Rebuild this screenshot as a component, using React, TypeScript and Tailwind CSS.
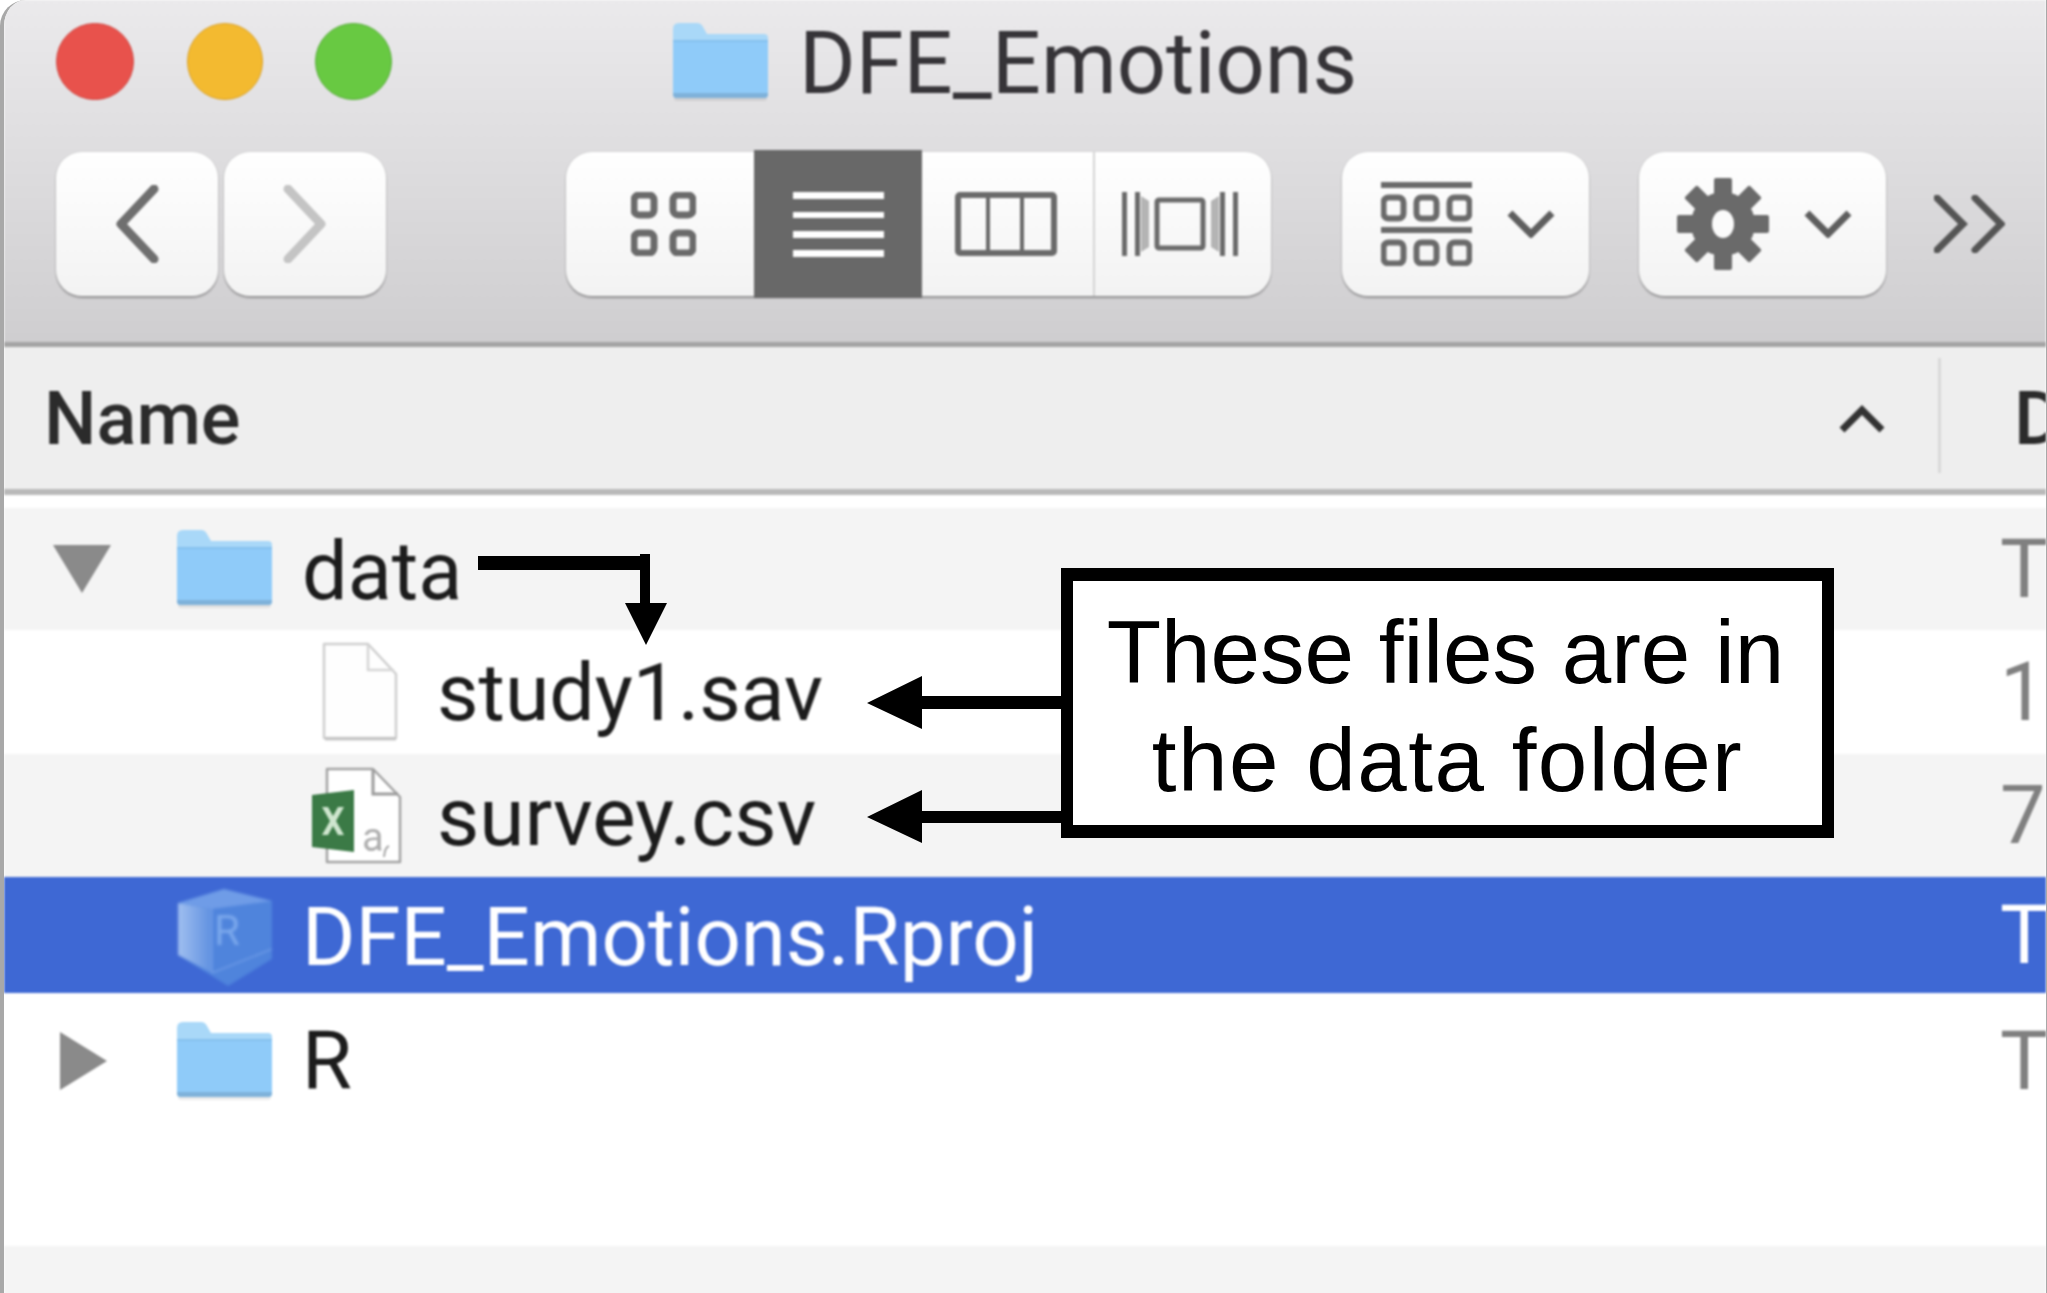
import React from "react";

function Folder({ className = "" }: { className?: string }) {
  return (
    <svg viewBox="0 0 95 78" className={`w-[95px] h-[78px] shrink-0 ${className}`}>
      <rect x="1" y="72" width="93" height="6" rx="3" fill="#000" opacity="0.08" />
      <path d="M0 6 Q0 0 6 0 H24 Q28 0 30 4 L34 11 H91 Q95 11 95 15 V24 H0 Z" fill="#a9d8f8" />
      <path d="M0 18 H95 V72 Q95 75 91 75 H4 Q0 75 0 72 Z" fill="#8fcbf9" />
      <rect x="0" y="17" width="95" height="2" fill="#85c0ee" />
      <path d="M0 70 H95 V71 Q95 75 91 75 H4 Q0 75 0 71 Z" fill="#7fb2da" />
    </svg>
  );
}

function FileIcon() {
  return (
    <svg viewBox="0 0 76 100" className="w-[76px] h-[100px]">
      <path d="M2 2 H46 L74 32 V96 H2 Z" fill="#fefefe" stroke="#cfcfcf" strokeWidth="2.5" strokeLinejoin="round" />
      <path d="M46 3 V28 H72" fill="none" stroke="#d6d6d6" strokeWidth="2.5" />
      <rect x="3" y="96" width="71" height="3" fill="#000" opacity="0.12" />
    </svg>
  );
}

function ExcelIcon() {
  return (
    <svg viewBox="0 0 90 98" className="w-[90px] h-[98px]">
      <path d="M15 2 H61 L88 30 V95 H15 Z" fill="#fff" stroke="#a3a3a3" strokeWidth="2.5" strokeLinejoin="round" />
      <path d="M61 3 V27 H86" fill="none" stroke="#9c9c9c" strokeWidth="3" />
      <path d="M0 28 L42 23 V85 L0 80 Z" fill="#3b7a46" />
      <path d="M10 40 H16 L21 49 L26 40 H32 L24 54 L32 68 H26 L21 59 L16 68 H10 L18 54 Z" fill="#cfe6cf" />
      <text x="50" y="84" fontSize="40" fill="#b0b0b0" fontFamily="Roboto, sans-serif">a</text>
      <path d="M72 90 Q73 80 77 79" fill="none" stroke="#a6a6a6" strokeWidth="2" />
    </svg>
  );
}

function RprojIcon() {
  return (
    <svg viewBox="0 0 94 98" className="w-[94px] h-[98px] blur-[1px]">
      <defs>
        <linearGradient id="cubeLeft" x1="0" y1="0" x2="1" y2="0">
          <stop offset="0" stopColor="#a0bff0" />
          <stop offset="1" stopColor="#5f90e0" />
        </linearGradient>
      </defs>
      <path d="M0 14 L46 0 L94 12 V70 L50 97 L0 66 Z" fill="#4f84dc" />
      <path d="M0 14 L34 20 V84 L0 66 Z" fill="url(#cubeLeft)" />
      <path d="M0 14 L46 0 L94 12 L34 20 Z" fill="#6f9ce7" />
      <path d="M34 84 L94 60 M34 20 V84" stroke="#6f9ce7" strokeWidth="1.5" fill="none" />
      <text x="36" y="56" fontSize="42" fill="#7ba8ec" fontFamily="Roboto, sans-serif">R</text>
    </svg>
  );
}

function Chev({ dir, color }: { dir: "l" | "r"; color: string }) {
  return (
    <svg viewBox="0 0 44 78" className="w-[44px] h-[78px]">
      <path d={dir === "l" ? "M39 4 L6 39 L39 74" : "M5 4 L38 39 L5 74"} fill="none" stroke={color} strokeWidth="9" strokeLinecap="round" strokeLinejoin="round" />
    </svg>
  );
}

function SmallChev({ className = "" }: { className?: string }) {
  return (
    <svg viewBox="0 0 48 28" className={`w-[48px] h-[28px] ${className}`}>
      <path d="M3 3 L24 24 L45 3" fill="none" stroke="#5e5e5e" strokeWidth="7" />
    </svg>
  );
}

function IconGrid() {
  return (
    <svg viewBox="0 0 65 64" className="w-[65px] h-[64px]" fill="none" stroke="#6a6a6a" strokeWidth="7">
      <rect x="3" y="3" width="20" height="20" rx="5" />
      <rect x="42" y="3" width="20" height="20" rx="5" />
      <rect x="3" y="41" width="20" height="20" rx="5" />
      <rect x="42" y="41" width="20" height="20" rx="5" />
    </svg>
  );
}

function IconList() {
  return (
    <svg viewBox="0 0 91 65" className="w-[91px] h-[65px]" fill="#fff">
      <rect x="0" y="0" width="91" height="7" />
      <rect x="0" y="20" width="91" height="6" />
      <rect x="0" y="39" width="91" height="7" />
      <rect x="0" y="58" width="91" height="7" />
    </svg>
  );
}

function IconColumns() {
  return (
    <svg viewBox="0 0 102 64" className="w-[102px] h-[64px]" fill="none" stroke="#6a6a6a" strokeWidth="6">
      <rect x="3" y="3" width="96" height="58" rx="2" />
      <path d="M33 3 V61 M67 3 V61" strokeWidth="4" />
    </svg>
  );
}

function IconCover() {
  return (
    <svg viewBox="0 0 116 64" className="w-[116px] h-[64px]" fill="#6a6a6a">
      <rect x="0" y="0" width="5" height="64" />
      <rect x="13" y="0" width="5" height="64" />
      <rect x="111" y="0" width="5" height="64" />
      <rect x="98" y="0" width="5" height="64" />
      <path d="M19 4 L27 9 V55 L19 60 Z M97 4 L89 9 V55 L97 60 Z" fill="#b4b4b4" />
      <rect x="35" y="8" width="46" height="48" rx="2" fill="none" stroke="#6a6a6a" strokeWidth="5" />
    </svg>
  );
}

function IconGroup() {
  const squares = [0, 33, 66];
  return (
    <svg viewBox="0 0 91 84" className="w-[91px] h-[84px]">
      <rect x="0" y="0" width="91" height="6" fill="#6a6a6a" />
      <rect x="0" y="45" width="91" height="6" fill="#6a6a6a" />
      {squares.map((x) => (
        <g key={x} fill="none" stroke="#6a6a6a" strokeWidth="6">
          <rect x={x + 2.5} y="15.5" width="20" height="21" rx="5" />
          <rect x={x + 2.5} y="60.5" width="20" height="21" rx="5" />
        </g>
      ))}
    </svg>
  );
}

function IconGear() {
  const angles = [0, 45, 90, 135];
  return (
    <svg viewBox="-46 -46 92 92" className="w-[92px] h-[92px]">
      {angles.map((a) => (
        <rect key={a} x="-9" y="-46" width="18" height="92" rx="2" fill="#6a6a6a" transform={`rotate(${a})`} />
      ))}
      <circle r="32" fill="#6a6a6a" />
      <ellipse rx="11" ry="14" fill="#fbfbfb" />
    </svg>
  );
}

function Btn({ className = "", children }: { className?: string; children?: React.ReactNode }) {
  return (
    <div className={`h-[144px] flex items-center rounded-[26px] bg-gradient-to-b from-[#ffffff] to-[#f3f3f3] shadow-[0_2px_2px_rgba(0,0,0,0.3),0_0_1px_rgba(0,0,0,0.3)] ${className}`}>
      {children}
    </div>
  );
}

function DateCell({ text, selected }: { text: string; selected?: boolean }) {
  return (
    <div className={`w-[46px] shrink-0 overflow-hidden whitespace-nowrap text-[81px] leading-none ${selected ? "text-white" : "text-[#808080]"}`}>
      {text}
    </div>
  );
}

export default function App() {
  return (
    <div className="relative w-[2047px] h-[1293px] overflow-hidden bg-white border-l-[4px] border-r border-[#a8a8a8] rounded-tl-[26px] font-['Roboto',sans-serif] text-[#1c1c1c]">
      <div className="h-[1301px] flex flex-col blur-[0.8px]">
        {/* Toolbar */}
        <div className="h-[347px] shrink-0 border-b-[5px] border-[#a4a4a4] bg-gradient-to-b from-[#ebeaec] to-[#cfced0] pt-[23px] pl-[52px]">
          <div className="flex items-center h-[77px]">
            <div className="w-[78px] h-[77px] rounded-full bg-[#e8524c] border border-[#cf4742]" />
            <div className="w-[76px] h-[77px] rounded-full bg-[#f3ba30] border border-[#d9a12c] ml-[53px]" />
            <div className="w-[77px] h-[77px] rounded-full bg-[#68c942] border border-[#55ab38] ml-[52px]" />
            <Folder className="ml-[281px]" />
            <div className="ml-[31px] pt-[5px] text-[86.5px] leading-none text-[#363438] whitespace-nowrap">DFE_Emotions</div>
          </div>
          <div className="flex items-center mt-[52px]">
            <Btn className="w-[162px] justify-center"><Chev dir="l" color="#6f6f6f" /></Btn>
            <Btn className="w-[162px] ml-[6px] justify-center"><Chev dir="r" color="#c4c4c4" /></Btn>
            <Btn className="w-[705px] ml-[180px]">
              <div className="w-[188px] h-full flex items-center justify-center pl-[6px]"><IconGrid /></div>
              <div className="w-[168px] h-[148px] bg-[#686868] flex items-center justify-center"><IconList /></div>
              <div className="w-[171px] h-full flex items-center justify-center pr-[4px]"><IconColumns /></div>
              <div className="w-[178px] h-full flex items-center justify-center border-l-2 border-[#d4d4d4] pr-[6px]"><IconCover /></div>
            </Btn>
            <Btn className="w-[247px] ml-[71px] pl-[39px] gap-[35px]">
              <IconGroup />
              <SmallChev />
            </Btn>
            <Btn className="w-[247px] ml-[50px] pl-[38px] gap-[35px]">
              <IconGear />
              <SmallChev />
            </Btn>
            <svg viewBox="0 0 71 58" className="w-[71px] h-[58px] ml-[48px]" fill="none" stroke="#555" strokeWidth="7" strokeLinecap="round">
              <path d="M3 3 L29 29 L3 55 M41 3 L67 29 L41 55" />
            </svg>
          </div>
        </div>

        {/* Column header */}
        <div className="h-[148px] shrink-0 bg-[#eeeeee] border-b-[6px] border-[#b9b9b9] flex items-center">
          <div className="flex-1 pl-[40px] pt-[2px] text-[74px] font-medium leading-none text-[#2b2b2b]">Name</div>
          <svg viewBox="0 0 46 28" className="w-[46px] h-[28px] mt-[2px]">
            <path d="M3 25 L23 5 L43 25" fill="none" stroke="#333" strokeWidth="7" />
          </svg>
          <div className="w-[3px] h-[115px] bg-[#d9d9d9] ml-[53px] mb-[6px]" />
          <div className="w-[32px] ml-[73px] overflow-hidden text-[74px] font-medium leading-none pt-[2px] text-[#2b2b2b] shrink-0">Date</div>
        </div>

        {/* Rows */}
        <div className="h-[13px] shrink-0 bg-white" />
        <div className="h-[122px] shrink-0 bg-[#f4f4f4] flex items-center">
          <div className="flex-1 flex items-center pl-[49px]">
            <svg viewBox="0 0 58 48" className="w-[58px] h-[48px] shrink-0"><path d="M0 0 H58 L29 48 Z" fill="#8a8a8a" /></svg>
            <Folder className="ml-[66px]" />
            <div className="ml-[30px] text-[81px] leading-none pt-[4px]">data</div>
          </div>
          <DateCell text="Today" />
        </div>
        <div className="h-[124px] shrink-0 bg-white flex items-center">
          <div className="flex-1 flex items-center pl-[318px]">
            <FileIcon />
            <div className="ml-[39px] text-[80.5px] leading-none pt-[2px]">study1.sav</div>
          </div>
          <DateCell text="12/3" />
        </div>
        <div className="h-[123px] shrink-0 bg-[#f4f4f4] flex items-center">
          <div className="flex-1 flex items-center pl-[308px]">
            <ExcelIcon />
            <div className="ml-[35px] text-[82px] leading-none pt-[2px]">survey.csv</div>
          </div>
          <DateCell text="7/12" />
        </div>
        <div className="h-[116px] shrink-0 bg-[#3e68d4] flex items-center text-white">
          <div className="flex-1 flex items-center pl-[174px] pt-[6px]">
            <RprojIcon />
            <div className="ml-[30px] text-[81.5px] leading-none whitespace-nowrap">DFE_Emotions.Rproj</div>
          </div>
          <DateCell text="Today" selected />
        </div>
        <div className="h-[136px] shrink-0 bg-white flex items-center">
          <div className="flex-1 flex items-center pl-[56px]">
            <svg viewBox="0 0 47 58" className="w-[47px] h-[58px] shrink-0"><path d="M0 0 L47 29 L0 58 Z" fill="#8a8a8a" /></svg>
            <Folder className="ml-[70px]" />
            <div className="ml-[30px] text-[81px] leading-none">R</div>
          </div>
          <DateCell text="Today" />
        </div>
        <div className="h-[117px] shrink-0 bg-white" />
        <div className="flex-1 bg-[#f4f4f4]" />
      </div>

      {/* Annotation overlay */}
      <svg viewBox="0 0 2047 1293" className="absolute left-[-4px] top-0 w-[2047px] h-[1293px] pointer-events-none">
        <path d="M478 556 H640 V554 H650 V603 H667 L646 645 L625 603 H640 V570 H478 Z" fill="#000" />
        <path d="M867 703 L922 676 V696 H1062 V709 H922 V729 Z" fill="#000" />
        <path d="M867 817 L922 790 V811 H1062 V823 H922 V843 Z" fill="#000" />
      </svg>
      <div className="absolute left-[1057px] top-[568px] w-[773px] h-[270px] bg-white border-x-[12px] border-y-[13px] border-black flex items-center justify-center pt-[5px] text-center text-black font-['Liberation_Sans',sans-serif] text-[89px] leading-[108px]">
        <div>
          <div className="-ml-[4px]">These files are in</div>
          <div className="tracking-[1.5px]">the data folder</div>
        </div>
      </div>
    </div>
  );
}
